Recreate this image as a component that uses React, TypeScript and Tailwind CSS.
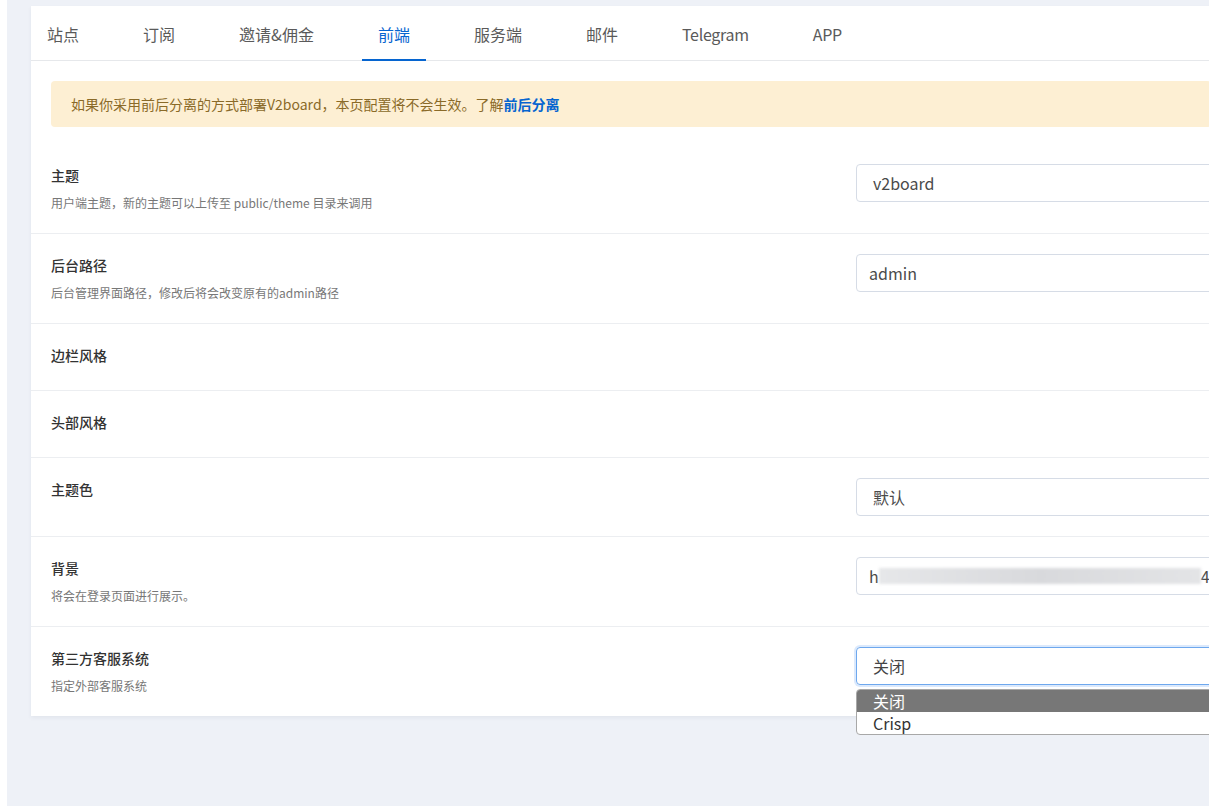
import React from 'react';

type Row = {
  label: string;
  desc?: string;
  control?: 'select' | 'input' | 'blur' | 'open';
  value?: string;
};

const tabs = ['站点', '订阅', '邀请&佣金', '前端', '服务端', '邮件', 'Telegram', 'APP'];

const rows: Row[] = [
  { label: '主题', desc: '用户端主题，新的主题可以上传至 public/theme 目录来调用', control: 'select', value: 'v2board' },
  { label: '后台路径', desc: '后台管理界面路径，修改后将会改变原有的admin路径', control: 'input', value: 'admin' },
  { label: '边栏风格' },
  { label: '头部风格' },
  { label: '主题色', control: 'select', value: '默认' },
  { label: '背景', desc: '将会在登录页面进行展示。', control: 'blur' },
  { label: '第三方客服系统', desc: '指定外部客服系统', control: 'open', value: '关闭' },
];

function Control({ row }: { row: Row }) {
  if (row.control === 'input') {
    return (
      <div className="h-[38px] border border-[#d6dce6] rounded-[4px] pl-3 flex items-center text-[16px] text-[#4a4a4a]">
        {row.value}
      </div>
    );
  }
  if (row.control === 'select') {
    return (
      <div className="h-[38px] border border-[#d6dce6] rounded-[4px] pl-4 flex items-center text-[16px] text-[#4a4a4a]">
        {row.value}
      </div>
    );
  }
  if (row.control === 'blur') {
    // value is masked in the screenshot
    return (
      <div className="h-[38px] border border-[#d6dce6] rounded-[4px] pl-3 flex items-center text-[16px] text-[#4a4a4a] overflow-hidden">
        <span>h</span>
        <div className="w-[322px] h-[16px] bg-gradient-to-r from-[#e6e7e9] via-[#d8d9dc] to-[#e3e4e6] blur-[1.5px]" />
        <span>4</span>
      </div>
    );
  }
  if (row.control === 'open') {
    return (
      <div className="relative">
        <div className="h-[38px] border border-[#6ea8ee] rounded-[4px] pl-4 flex items-center text-[16px] text-[#444] shadow-[0_0_0_2px_rgba(90,155,240,0.22)]">
          {row.value}
        </div>
        {/* native dropdown list */}
        <div className="absolute top-[42px] left-0 right-0 z-10 bg-white border border-[#a8a8a8] rounded-[4px] overflow-hidden">
          <div className="pl-4 text-[16px] leading-[22px] bg-[#777777] text-white">关闭</div>
          <div className="pl-4 text-[16px] leading-[22px] text-[#333]">Crisp</div>
        </div>
      </div>
    );
  }
  return null;
}

export default function App() {
  return (
    <div
      className="w-[1209px] h-[807px] overflow-hidden bg-white"
      style={{ fontFamily: '"Noto Sans CJK SC", "Noto Sans", sans-serif' }}
    >
      <div className="ml-[7px] h-[806px] bg-[#eef1f7] pt-[6px] pl-[24px]">
        <div className="w-[1400px] bg-white shadow-[0_2px_4px_rgba(30,50,90,0.06)]">
          {/* Tabs */}
          <div className="flex border-b border-[#e6e8eb]">
            {tabs.map((t) => {
              const active = t === '前端';
              const latin = t === 'Telegram' || t === 'APP';
              return (
                <div
                  key={t}
                  className={`px-4 pt-[16px] pb-[13px] mr-8 -mb-px border-b-2 text-[16px] leading-[24px] ${
                    latin ? 'tracking-[-0.3px]' : ''
                  } ${active ? 'border-[#0665d0] text-[#0665d0]' : 'border-transparent text-[#5a5a5a]'}`}
                >
                  {t}
                </div>
              );
            })}
          </div>

          {/* Notice */}
          <div className="px-5 pt-5 pb-[17px]">
            <div className="w-[1160px] rounded-[4px] bg-[#fdefd3] px-5 py-3 text-[14px] leading-[22px] text-[#8a6a28]">
              如果你采用前后分离的方式部署V2board，本页配置将不会生效。了解
              <span className="font-bold text-[#0665d0]">前后分离</span>
            </div>
          </div>

          {/* Settings rows */}
          <div>
            {rows.map((row, i) => (
              <div
                key={row.label}
                className={`flex items-start px-5 py-5 ${i < rows.length - 1 ? 'border-b border-[#eceef1]' : ''}`}
              >
                <div className="w-[805px] min-h-[26px] shrink-0">
                  <div className="text-[14px] leading-[22px] font-medium text-[#333]">{row.label}</div>
                  {row.desc && (
                    <div className="mt-[7px] text-[12px] leading-[20px] text-[#777]">{row.desc}</div>
                  )}
                </div>
                <div className="flex-1">
                  <Control row={row} />
                </div>
              </div>
            ))}
          </div>
        </div>
      </div>
    </div>
  );
}
